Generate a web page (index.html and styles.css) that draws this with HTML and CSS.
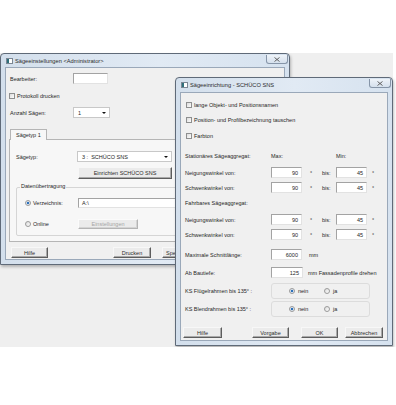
FILE: index.html
```html
<!DOCTYPE html>
<html lang="de">
<head>
    <meta charset="UTF-8">
    <meta name="viewport" content="width=device-width, initial-scale=1.0">
    <title>Sägeeinstellungen</title>
    <link rel="stylesheet" href="styles.css">
</head>
<body>
    <div class="desktop">

        <!-- Fenster 1: Sägeeinstellungen -->
        <div class="window win-settings">
            <div class="titlebar">
                <svg class="app-icon" width="7" height="6" viewBox="0 0 7 6">
                    <rect x="0.5" y="0.5" width="6" height="5" fill="#fff" stroke="#7b8794"/>
                    <rect x="1" y="1" width="2" height="4" fill="#2f6f7a"/>
                </svg>
                <span class="title">Sägeeinstellungen &lt;Administrator&gt;</span>
                <span class="close-btn">
                    <svg width="6" height="5" viewBox="0 0 6 5"><path d="M0.5 0.5 L5.5 4.5 M5.5 0.5 L0.5 4.5" stroke="#555" stroke-width="0.9"/></svg>
                </span>
            </div>
            <div class="client client-settings">
                <div class="row row-user">
                    <span class="lbl lbl-main">Bearbeiter:</span>
                    <span class="input input-user"></span>
                </div>
                <div class="row row-log">
                    <span class="cb"></span>
                    <span>Protokoll drucken</span>
                </div>
                <div class="row row-count">
                    <span class="lbl lbl-main">Anzahl Sägen:</span>
                    <span class="select select-count"><span>1</span><i class="arrow"></i></span>
                </div>

                <div class="tabs"><span class="tab">Sägetyp 1</span></div>
                <div class="tab-page">
                    <div class="row row-type">
                        <span class="lbl lbl-type">Sägetyp:</span>
                        <span class="select select-type"><span>3 :&nbsp; SCHÜCO SNS</span><i class="arrow"></i></span>
                    </div>
                    <button class="btn btn-setup">Einrichten SCHÜCO SNS</button>

                    <div class="group">
                        <span class="group-title">Datenübertragung</span>
                        <div class="row row-dir">
                            <span class="radio-lbl"><span class="rb checked"></span>Verzeichnis:</span>
                            <span class="input input-dir">A:\</span>
                        </div>
                        <div class="row row-online">
                            <span class="radio-lbl"><span class="rb"></span>Online</span>
                            <button class="btn btn-options" disabled>Einstellungen</button>
                        </div>
                    </div>
                </div>

                <div class="button-bar bar-settings">
                    <button class="btn btn-help1">Hilfe</button>
                    <button class="btn btn-print">Drucken</button>
                    <button class="btn btn-save">Speichern</button>
                </div>
            </div>
        </div>

        <!-- Fenster 2: Sägeeinrichtung -->
        <div class="window win-setup">
            <div class="titlebar">
                <svg class="app-icon" width="7" height="6" viewBox="0 0 7 6">
                    <rect x="0.5" y="0.5" width="6" height="5" fill="#fff" stroke="#7b8794"/>
                    <rect x="1" y="1" width="2" height="4" fill="#2f6f7a"/>
                </svg>
                <span class="title">Sägeeinrichtung - SCHÜCO SNS</span>
                <span class="close-btn">
                    <svg width="6" height="5" viewBox="0 0 6 5"><path d="M0.5 0.5 L5.5 4.5 M5.5 0.5 L0.5 4.5" stroke="#555" stroke-width="0.9"/></svg>
                </span>
            </div>
            <div class="client client-setup">
                <div class="row row-cb1"><span class="cb"></span><span>lange Objekt- und Positionsnamen</span></div>
                <div class="row row-cb2"><span class="cb"></span><span>Position- und Profilbezeichnung tauschen</span></div>
                <div class="row row-cb3"><span class="cb"></span><span>Farbton</span></div>

                <div class="angle-row row-head1">
                    <span>Stationäres Sägeaggregat:</span>
                    <span>Max:</span><span></span><span></span>
                    <span>Min:</span>
                </div>
                <div class="angle-row row-n1">
                    <span>Neigungswinkel von:</span>
                    <span class="input num">90</span><span class="deg">°</span><span>bis:</span>
                    <span class="input num">45</span><span class="deg deg2">°</span>
                </div>
                <div class="angle-row row-s1">
                    <span>Schwenkwinkel von:</span>
                    <span class="input num">90</span><span class="deg">°</span><span>bis:</span>
                    <span class="input num">45</span><span class="deg deg2">°</span>
                </div>

                <div class="angle-row row-head2">
                    <span>Fahrbares Sägeaggregat:</span>
                </div>
                <div class="angle-row row-n2">
                    <span>Neigungswinkel von:</span>
                    <span class="input num">90</span><span class="deg">°</span><span>bis:</span>
                    <span class="input num">45</span><span class="deg deg2">°</span>
                </div>
                <div class="angle-row row-s2">
                    <span>Schwenkwinkel von:</span>
                    <span class="input num">90</span><span class="deg">°</span><span>bis:</span>
                    <span class="input num">45</span><span class="deg deg2">°</span>
                </div>

                <div class="unit-row row-max">
                    <span class="lbl-wide">Maximale Schnittlänge:</span>
                    <span class="input num">6000</span>
                    <span class="unit">mm</span>
                </div>
                <div class="unit-row row-depth">
                    <span class="lbl-wide">Ab Bautiefe:</span>
                    <span class="input num num-depth">125</span>
                    <span class="unit unit-depth">mm Fassadenprofile drehen</span>
                </div>

                <div class="unit-row row-ks1">
                    <span class="lbl-wide">KS Flügelrahmen bis 135° :</span>
                    <div class="option-box">
                        <span class="radio-opt opt-no"><span class="rb checked"></span>nein</span>
                        <span class="radio-opt"><span class="rb"></span>ja</span>
                    </div>
                </div>
                <div class="unit-row row-ks2">
                    <span class="lbl-wide">KS Blendrahmen bis 135° :</span>
                    <div class="option-box">
                        <span class="radio-opt opt-no"><span class="rb checked"></span>nein</span>
                        <span class="radio-opt"><span class="rb"></span>ja</span>
                    </div>
                </div>

                <div class="button-bar bar-setup">
                    <button class="btn btn-help2">Hilfe</button>
                    <button class="btn btn-default">Vorgabe</button>
                    <button class="btn btn-ok">OK</button>
                    <button class="btn btn-cancel">Abbrechen</button>
                </div>
            </div>
        </div>

    </div>
</body>
</html>
```

FILE: styles.css
```css
/* --- Grundlayout --- */
body {
    margin: 0;
    background-color: #ffffff;
    font-family: "Liberation Sans", Arial, sans-serif;
    font-size: 5.5px;
    color: #262626;
}

.desktop {
    position: relative;
    margin-top: 53px;
    width: 393px;
    height: 294px;
    background-color: #efefef;
}

/* --- Fensterrahmen (Win7) --- */
.window {
    position: absolute;
    box-sizing: border-box;
    display: flex;
    flex-direction: column;
    border: 1px solid #5f6a78;
    border-radius: 4px 4px 0 0;
    padding: 0 4px 4px 4px;
    background: linear-gradient(to right, #d3dfec, #e1eaf4 55%, #d6e2ef);
    box-shadow: 1px 2px 3px rgba(0, 0, 0, 0.25);
}

.win-settings { left: 0; top: 0; width: 290px; height: 212px; }
.win-setup { left: 175px; top: 24px; width: 218px; height: 269px; }

.titlebar {
    display: flex;
    align-items: center;
    gap: 2px;
    height: 13px;
    padding-left: 1px;
}

.win-setup .titlebar { height: 14px; }

.title { color: #2b2b2b; font-size: 5.7px; }

.close-btn {
    position: absolute;
    top: 1px;
    right: 1px;
    width: 20px;
    height: 8px;
    display: flex;
    align-items: center;
    justify-content: center;
    border: 1px solid #8695a8;
    border-top: none;
    border-radius: 0 0 3px 3px;
    background: linear-gradient(#eef3f9, #d5e0ed);
}

.client {
    flex: 1;
    display: flex;
    flex-direction: column;
    align-items: flex-start;
    background-color: #f0f0f0;
    border: 1px solid #9aa8b9;
    overflow: hidden;
}

/* --- Steuerelemente --- */
.row { display: flex; align-items: center; }

.input {
    box-sizing: border-box;
    display: flex;
    align-items: center;
    height: 11px;
    padding: 0 3px;
    background-color: #fff;
    border: 1px solid;
    border-color: #a3a3a3 #e2e2e2 #e2e2e2 #a3a3a3;
}

.select {
    box-sizing: border-box;
    display: flex;
    align-items: center;
    justify-content: space-between;
    height: 11px;
    padding: 0 3px 0 4px;
    background-color: #fff;
    border: 1px solid #c8c8c8;
}

.arrow {
    width: 0;
    height: 0;
    border-left: 2px solid transparent;
    border-right: 2px solid transparent;
    border-top: 2px solid #111;
}

.cb {
    box-sizing: border-box;
    width: 6px;
    height: 6px;
    margin-right: 2px;
    border: 1px solid #8e8f8f;
    background: linear-gradient(135deg, #dcdcdc, #fdfdfd);
}

.rb {
    box-sizing: border-box;
    display: inline-block;
    width: 6px;
    height: 6px;
    margin-right: 2px;
    border: 1px solid #9a9a9a;
    border-radius: 50%;
    background: linear-gradient(135deg, #dcdcdc, #fdfdfd);
}

.rb.checked { background: radial-gradient(circle, #1d5fa8 0, #3c82cc 1.4px, #e8eef5 1.6px); }

.btn {
    box-sizing: border-box;
    height: 11px;
    padding: 0;
    font: inherit;
    color: #2b2b2b;
    background-color: #ebebeb;
    border: 1px solid;
    border-color: #f7f7f7 #5d5d5d #5d5d5d #f7f7f7;
    box-shadow: inset -1px -1px 0 #a9a9a9;
}

.btn:disabled {
    color: #a5a5a5;
    border-color: #fbfbfb #b4b4b4 #b4b4b4 #fbfbfb;
    box-shadow: inset -1px -1px 0 #d4d4d4;
}

/* --- Fenster 1 Inhalt --- */
.client-settings { padding: 5px 4px 0 4px; }

.lbl-main { width: 63px; }
.row-user { height: 11px; }
.input-user { width: 35px; }
.row-log { height: 10px; margin-top: 7px; margin-left: -1px; }
.row-count { height: 11px; margin-top: 6px; }
.select-count { width: 37px; }

.tabs { margin-top: 11px; margin-bottom: -1px; display: flex; position: relative; }

.tab {
    box-sizing: border-box;
    width: 37px;
    height: 11px;
    padding-left: 5px;
    display: flex;
    align-items: center;
    background-color: #f7f7f7;
    border: 1px solid #b5b5b5;
    border-bottom: none;
}

.tab-page {
    box-sizing: border-box;
    align-self: stretch;
    margin-left: -1px;
    height: 103px;
    padding: 0 0 0 6px;
    display: flex;
    flex-direction: column;
    align-items: flex-start;
    background-color: #f7f7f7;
    border: 1px solid #b5b5b5;
}

.row-type { height: 11px; margin-top: 11px; }
.lbl-type { width: 61px; }
.select-type { width: 95px; }

.btn-setup { width: 94px; height: 12px; margin: 5px 0 0 62px; }

.group {
    box-sizing: border-box;
    align-self: stretch;
    height: 49px;
    margin: 8px 0 0 0;
    padding-left: 8px;
    display: flex;
    flex-direction: column;
    border: 1px solid #d5d5d5;
    border-radius: 2px;
}

.group-title {
    align-self: flex-start;
    margin: -5px 0 0 -5px;
    padding: 0 1px;
    line-height: 7px;
    background-color: #f7f7f7;
}

.radio-lbl { width: 53px; display: flex; align-items: center; }
.row-dir { height: 10px; margin-top: 8px; }
.input-dir { flex: 1; height: 10px; padding-left: 3px; }
.row-online { height: 10px; margin-top: 11px; }
.btn-options { width: 60px; height: 10px; }

.button-bar { display: flex; align-items: center; }
.bar-settings { margin-top: 5px; margin-left: 1px; }
.bar-settings .btn { width: 38px; }
.btn-help1 { width: 37px !important; margin-right: 65px; }
.btn-save { margin-left: 11px; text-align: left; padding-left: 3px; }

/* --- Fenster 2 Inhalt --- */
.client-setup { padding: 7px 4px 0 4px; }

.row-cb1, .row-cb2, .row-cb3 { height: 10px; margin-left: 1px; }
.row-cb2 { margin-top: 5px; }
.row-cb3 { margin-top: 6px; }

.angle-row {
    display: grid;
    grid-template-columns: 86px 31px 20px 14px 31px 10px;
    align-items: center;
    height: 11px;
}

.deg { padding-left: 8px; }
.deg2 { padding-left: 5px; }
.num { justify-content: flex-end; }

.row-head1 { height: 10px; margin-top: 10px; }
.row-n1 { margin-top: 6px; }
.row-s1 { margin-top: 4px; }
.row-head2 { height: 10px; margin-top: 5px; }
.row-n2 { margin-top: 6px; }
.row-s2 { margin-top: 4px; }

.unit-row { display: flex; align-items: center; height: 11px; }
.lbl-wide { width: 86px; }
.row-max .num { width: 31px; }
.num-depth { width: 32px; }
.unit { margin-left: 7px; }
.unit-depth { margin-left: 5px; }
.row-max { margin-top: 9px; }
.row-depth { margin-top: 7px; }

.row-ks1 { height: 16px; margin-top: 5px; }
.row-ks2 { height: 16px; margin-top: 2px; }

.option-box {
    box-sizing: border-box;
    display: flex;
    align-items: center;
    width: 99px;
    height: 16px;
    padding-left: 17px;
    border: 1px solid #dcdcdc;
    border-radius: 3px;
}

.radio-opt { display: flex; align-items: center; }
.radio-opt .rb { margin-right: 3px; }
.opt-no { width: 35px; }

.bar-setup { margin-top: 10px; margin-left: -2px; }
.bar-setup .btn { width: 37px; }
.btn-help2 { width: 39px !important; margin-right: 30px; }
.btn-ok { margin-left: 12px; }
.btn-cancel { width: 38px !important; margin-left: 7px; }
```
